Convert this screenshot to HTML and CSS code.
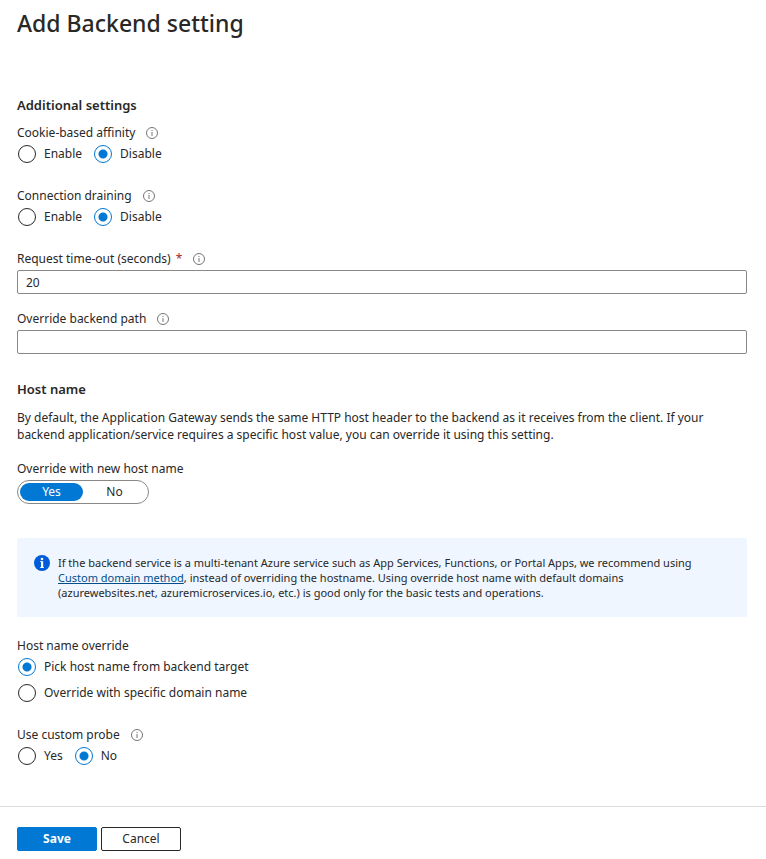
FILE: index.html
```html
<!DOCTYPE html>
<html lang="en">
<head>
<meta charset="utf-8">
<title>Add Backend setting</title>
<link rel="stylesheet" href="styles.css">
</head>
<body>
<svg width="0" height="0" class="defs" aria-hidden="true">
  <symbol id="info" viewBox="0 0 12 12">
    <circle cx="6" cy="6" r="5.5" fill="none" stroke="#757575"/>
    <path d="M6 3v1M6 5v4" stroke="#757575" fill="none"/>
  </symbol>
</svg>
<form class="page">
  <main class="content">
    <h1>Add Backend setting</h1>

    <h2>Additional settings</h2>
    <fieldset class="group">
      <legend class="label">Cookie-based affinity <svg class="info"><use href="#info"/></svg></legend>
      <div class="options">
        <label class="option"><input type="radio" name="affinity">Enable</label>
        <label class="option"><input type="radio" name="affinity" checked>Disable</label>
      </div>
    </fieldset>
    <fieldset class="group">
      <legend class="label">Connection draining <svg class="info"><use href="#info"/></svg></legend>
      <div class="options">
        <label class="option"><input type="radio" name="draining">Enable</label>
        <label class="option"><input type="radio" name="draining" checked>Disable</label>
      </div>
    </fieldset>
    <div class="field">
      <label class="label" for="timeout">Request time-out (seconds) <span class="required">*</span> <svg class="info"><use href="#info"/></svg></label>
      <input class="text" id="timeout" type="text" value="20">
    </div>
    <div class="field">
      <label class="label" for="path">Override backend path <svg class="info"><use href="#info"/></svg></label>
      <input class="text" id="path" type="text">
    </div>

    <h2 class="host">Host name</h2>
    <p class="description">By default, the Application Gateway sends the same HTTP host header to the backend as it receives from the client. If your backend application/service requires a specific host value, you can override it using this setting.</p>
    <fieldset class="group">
      <legend class="label">Override with new host name</legend>
      <div class="toggle">
        <label><input type="radio" name="newhost" checked><span>Yes</span></label>
        <label><input type="radio" name="newhost"><span>No</span></label>
      </div>
    </fieldset>

    <div class="notice">
      <svg class="notice-icon" viewBox="0 0 16 16" aria-hidden="true">
        <circle cx="8" cy="8" r="8" fill="#015cda"/>
        <circle cx="8" cy="4" r="1.3" fill="#fff"/>
        <path d="M6 6.2H9.2V12.2H10V13H6V12.2H7V7H6z" fill="#fff"/>
      </svg>
      <p>If the backend service is a multi-tenant Azure service such as App Services, Functions, or Portal Apps, we recommend using <a href="#">Custom domain method</a>, instead of overriding the hostname. Using override host name with default domains (azurewebsites.net, azuremicroservices.io, etc.) is good only for the basic tests and operations.</p>
    </div>

    <fieldset class="group">
      <legend class="label">Host name override</legend>
      <div class="options stacked">
        <label class="option"><input type="radio" name="override" checked>Pick host name from backend target</label>
        <label class="option"><input type="radio" name="override">Override with specific domain name</label>
      </div>
    </fieldset>
    <fieldset class="group">
      <legend class="label">Use custom probe <svg class="info"><use href="#info"/></svg></legend>
      <div class="options">
        <label class="option"><input type="radio" name="probe">Yes</label>
        <label class="option"><input type="radio" name="probe" checked>No</label>
      </div>
    </fieldset>
  </main>
  <footer class="actions">
    <button class="primary" type="submit">Save</button>
    <button type="button">Cancel</button>
  </footer>
</form>
</body>
</html>
```
FILE: styles.css
```css
* {
  box-sizing: border-box;
}

body {
  margin: 0;
  background: #fff;
  color: #292827;
  font: 12px/20px "Segoe UI", "Noto Sans", sans-serif;
}

.defs {
  position: absolute;
}

.content {
  padding: 7px 19px 18px 17px;
}

h1 {
  margin: 0 0 56px;
  font-size: 23px;
  line-height: 32px;
  font-weight: 500;
}

h2 {
  margin: 0 0 8px;
  font-size: 13px;
  line-height: 20px;
  font-weight: 600;
}

.group {
  margin: 0 0 22px;
  padding: 0;
  border: 0;
  min-width: 0;
}

.label {
  display: flex;
  align-items: center;
  height: 20px;
  padding: 0;
}

.info {
  width: 12px;
  height: 12px;
  margin-left: 11px;
}

.required {
  margin-left: 5px;
  color: #a4262c;
}

.options {
  display: flex;
  gap: 11px;
  margin-top: 1px;
}

.stacked {
  flex-direction: column;
  gap: 6px;
}

.option {
  display: flex;
  align-items: center;
  gap: 7px;
}

.option input {
  appearance: none;
  width: 18px;
  height: 18px;
  margin: 1px;
  border: 1px solid #292827;
  border-radius: 50%;
}

.option input:checked {
  border-color: #0078d4;
  background: radial-gradient(circle, #0078d4 4px, transparent 5px);
}

.field {
  margin-bottom: 15px;
}

.text {
  display: block;
  width: 100%;
  height: 24px;
  margin-top: 1px;
  padding: 0 8px;
  border: 1px solid #8a8886;
  border-radius: 2px;
  background: #fff;
  color: inherit;
  font: inherit;
}

.host {
  margin: 25px 0 10px;
}

.description {
  margin: 0 0 16px;
  line-height: 17px;
}

.toggle {
  display: flex;
  width: 132px;
  height: 24px;
  margin-top: 1px;
  padding: 2px;
  border: 1px solid #8a8886;
  border-radius: 12px;
}

.toggle label {
  flex: 1;
  text-align: center;
}

.toggle input {
  position: absolute;
  opacity: 0;
}

.toggle span {
  display: block;
  height: 18px;
  line-height: 18px;
  border-radius: 9px;
}

.toggle input:checked + span {
  background: #0078d4;
  color: #fff;
}

.notice {
  display: flex;
  gap: 8px;
  margin: 34px 0 19px;
  padding: 17px 34px 17px 17px;
  border-radius: 2px;
  background: #eff6ff;
  font-size: 11px;
  line-height: 15px;
}

.notice p {
  flex: 1;
  margin: 0;
}

.notice a {
  color: #004e8c;
}

.notice-icon {
  width: 16px;
  height: 16px;
}

.actions {
  display: flex;
  gap: 4px;
  padding: 20px 17px 8px;
  border-top: 1px solid #dcdcdc;
}

button {
  width: 80px;
  height: 24px;
  padding: 0;
  border: 1px solid #292827;
  border-radius: 2px;
  background: #fff;
  color: #292827;
  font: inherit;
}

.primary {
  border-color: #0078d4;
  background: #0078d4;
  color: #fff;
  font-weight: 700;
}
```
